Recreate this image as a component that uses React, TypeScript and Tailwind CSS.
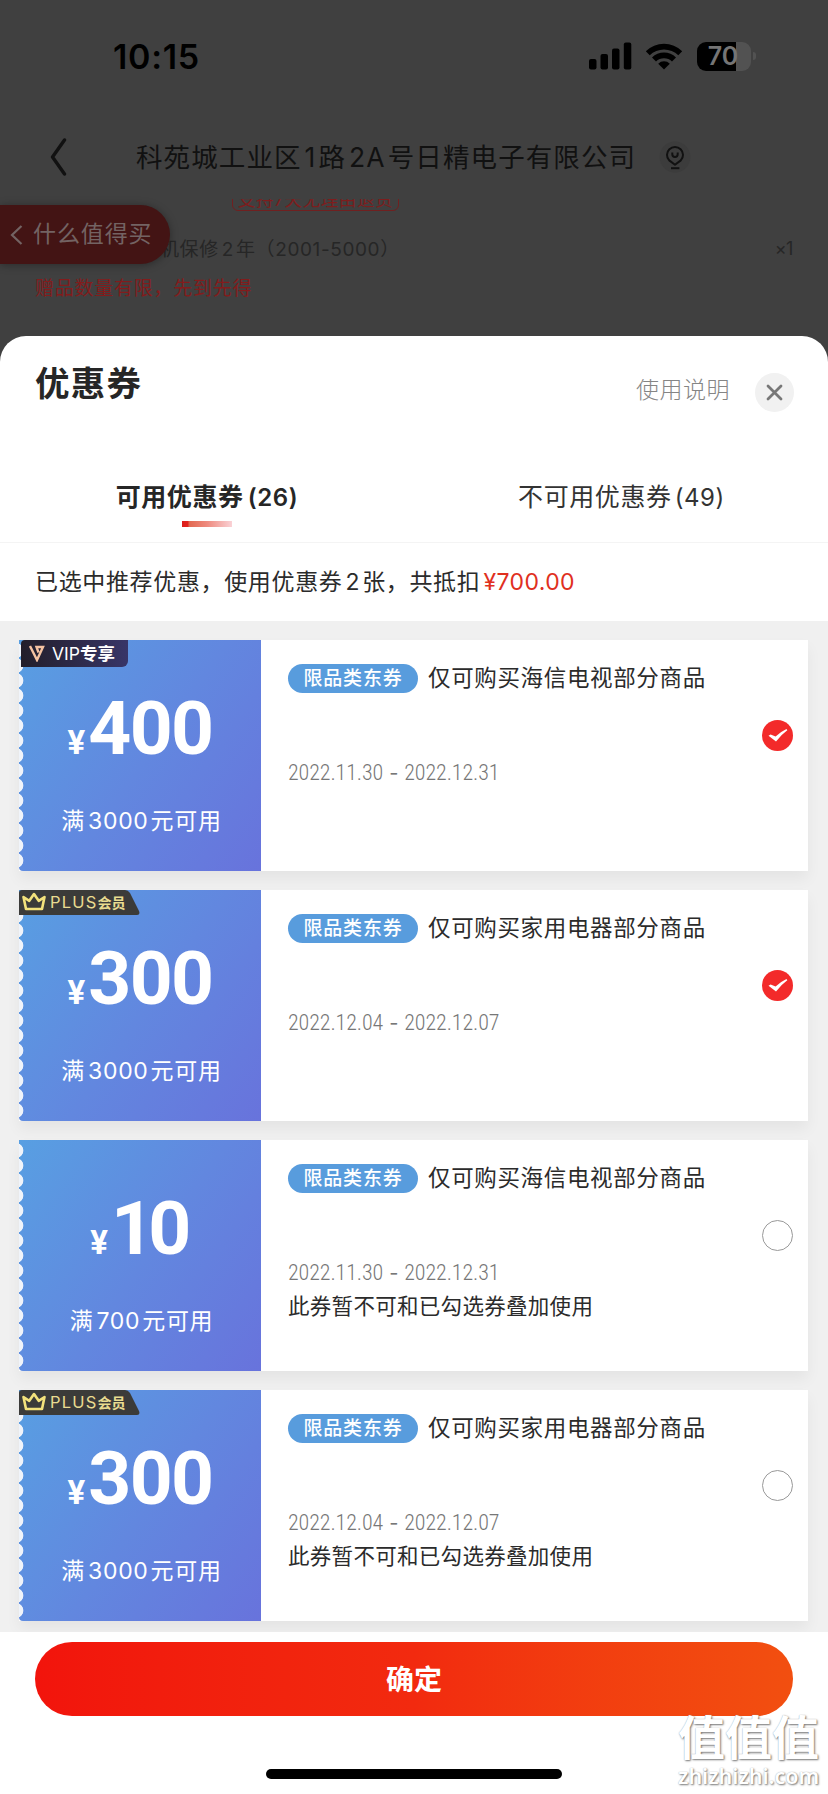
import React, { ReactNode } from 'react';

interface Coupon {
  id: number;
  amount: string;
  threshold: string;
  scope: string;
  period: [string, string];
  badge?: 'vip' | 'plus';
  selected?: boolean;
  note?: string;
}

const STACK_NOTE = '此券暂不可和已勾选券叠加使用';

const coupons: Coupon[] = [
  { id: 1, amount: '400', threshold: '3000', scope: '仅可购买海信电视部分商品', period: ['2022.11.30', '2022.12.31'], badge: 'vip', selected: true },
  { id: 2, amount: '300', threshold: '3000', scope: '仅可购买家用电器部分商品', period: ['2022.12.04', '2022.12.07'], badge: 'plus', selected: true },
  { id: 3, amount: '10', threshold: '700', scope: '仅可购买海信电视部分商品', period: ['2022.11.30', '2022.12.31'], note: STACK_NOTE },
  { id: 4, amount: '300', threshold: '3000', scope: '仅可购买家用电器部分商品', period: ['2022.12.04', '2022.12.07'], badge: 'plus', note: STACK_NOTE },
];

// Latin run inside Chinese text, with a little air on both sides
const Num = ({ children }: { children: ReactNode }) => <span className="ml-[3px] mr-[2px]">{children}</span>;

const StatusBar = () => (
  <div className="flex h-[112px] items-center justify-between pl-[113px] pr-[72px]">
    <span className="pt-0.5 text-[34px] font-semibold leading-none tracking-[0.7px] text-black">10:15</span>
    <div className="flex items-center">
      <svg className="mr-[13px]" width="43" height="28" viewBox="0 0 43 28">
        <rect x="0" y="17" width="7.5" height="10.5" rx="2" />
        <rect x="11.5" y="12" width="7.5" height="15.5" rx="2" />
        <rect x="23" y="6.5" width="7.5" height="21" rx="2" />
        <rect x="34.8" y="0.5" width="7.5" height="27" rx="2" />
      </svg>
      <svg className="mr-[14px]" width="38" height="28" viewBox="0 0 38 28">
        <path d="M0.8 9.3 A26 26 0 0 1 37.2 9.3 L33.3 13.3 A20.4 20.4 0 0 0 4.7 13.3 Z" />
        <path d="M7 15.5 A17 17 0 0 1 31 15.5 L27 19.5 A11.4 11.4 0 0 0 11 19.5 Z" />
        <path d="M13.2 21.7 A8.3 8.3 0 0 1 24.8 21.7 L19 27.5 Z" />
      </svg>
      <div className="flex h-[29px] w-[54px] items-center justify-center rounded-[9px] bg-[linear-gradient(90deg,#000_72%,#525252_72%)] pr-0.5">
        <span className="text-[25px] font-semibold leading-none text-[#757575]">70</span>
      </div>
      <span className="ml-[2px] h-2 w-[3px] rounded-r-full bg-[#525252]" />
    </div>
  </div>
);

const AddressBar = () => (
  <div className="flex h-[87px] items-center pl-[49px] pt-[3px] text-[#111]">
    <svg width="18" height="38" viewBox="0 0 18 38" fill="none" stroke="currentColor" strokeWidth="3.4" strokeLinecap="round" strokeLinejoin="round">
      <path d="M15.5 2 L3.5 19 L15.5 36" />
    </svg>
    <span className="ml-[69px] whitespace-nowrap text-[26.5px] leading-none tracking-[1.1px]">
      科苑城工业区<Num>1</Num>路<Num>2A</Num>号日精电子有限公司
    </span>
    <svg className="absolute left-[659px] top-[141px]" width="32" height="32" viewBox="0 0 32 32" fill="none" stroke="currentColor" strokeWidth="2">
      <circle cx="16" cy="16" r="15.5" fill="#3c3c3c" stroke="none" />
      <path d="M16 23.8 L10.2 19.4 A8 8 0 1 1 21.8 19.4 Z" strokeLinejoin="round" />
      <path d="M13.3 11.6 V13.2 A2.7 2.7 0 0 0 18.7 13.2 V11.6" />
      <path d="M12 27.2 H20.4" />
    </svg>
  </div>
);

// The order page that stays dimmed behind the sheet
const DimmedPage = () => (
  <div className="relative h-[336px] overflow-hidden">
    <StatusBar />
    <AddressBar />
    <div className="flex h-3 items-end overflow-hidden pl-[232px]">
      <span className="flex h-[29px] w-[167px] shrink-0 items-center justify-center rounded-md border border-[#702020] pt-[7px] text-[17.5px] leading-none tracking-[0.6px] text-[#7d1d1d]">
        支持7天无理由退货
      </span>
    </div>
    <div className="mt-[26px] flex h-6 items-center justify-between pl-[160px] pr-[35px] text-[19px] leading-none tracking-[0.6px] text-[#262626]">
      <span>机保修<Num>2</Num>年（2001-5000）</span>
      <span className="text-[18px] tracking-tight">×1</span>
    </div>
    <div className="mt-[15px] flex h-6 items-center pl-[35px] text-[19px] leading-none tracking-[0.75px] text-[#821c1c]">
      赠品数量有限，先到先得
    </div>
    <div className="absolute left-0 top-[205px] flex h-[59px] w-[170px] items-center rounded-r-full bg-[#431414] pl-2.5 text-[#736363] shadow-[0_1px_8px_rgba(0,0,0,0.35)]">
      <svg width="13" height="20" viewBox="0 0 13 20" fill="none" stroke="currentColor" strokeWidth="2.2">
        <path d="M11.5 1 L2 10 L11.5 19" />
      </svg>
      <span className="ml-[10px] whitespace-nowrap text-[23px] leading-none tracking-[0.9px]">什么值得买</span>
    </div>
  </div>
);

const VipBadge = () => (
  <div className="absolute left-0.5 top-0 flex h-[26.5px] w-[107px] items-center rounded-br-md rounded-tl bg-linear-to-r from-[#221e2a] to-[#383568] pl-2 text-white">
    <svg width="16" height="17" viewBox="0 0 16 17" fill="none" stroke="#f5c3a2" strokeWidth="2.4">
      <path d="M1 1 L8 15 L14 2 H7.5 L9.5 7.5" />
    </svg>
    <span className="ml-[7px] pt-px text-[17.5px] leading-none">
      VIP<span className="text-[17.5px] font-bold">专享</span>
    </span>
  </div>
);

const PlusBadge = () => (
  <div className="absolute left-0 top-0 flex h-[25px] w-[121px] items-center pl-[3px]">
    <svg className="absolute inset-0" width="121" height="25" viewBox="0 0 121 25">
      <path d="M3 0 H106 Q109 0 111 3 L120 21 Q121.5 25 118 25 H0 V3 Q0 0 3 0 Z" fill="#3b3b39" />
    </svg>
    <svg className="relative -top-px" width="24" height="19" viewBox="0 0 24 19" fill="none" stroke="#f3e27c" strokeWidth="2.6" strokeLinejoin="round">
      <path d="M4 17 L1.5 5 L7.3 8.8 L12 2 L16.7 8.8 L22.5 5 L20 17 Z" />
    </svg>
    <span className="relative ml-1 whitespace-nowrap text-[16.5px] leading-none tracking-[1.2px] text-[#e9dc90]">
      PLUS<span className="text-[14px] font-bold tracking-normal">会员</span>
    </span>
  </div>
);

const Radio = ({ checked }: { checked?: boolean }) =>
  checked ? (
    <svg width="31" height="31" viewBox="0 0 31 31">
      <circle cx="15.5" cy="15.5" r="15.5" fill="#f32a2a" />
      <path d="M6.5 15.8 L8.6 14.4 L13.6 16.6 Q18 12 24.5 9 L25.3 10.2 Q19 14.8 14 21.5 Z" fill="#fff" />
    </svg>
  ) : (
    <span className="size-[31px] rounded-full border-[1.5px] border-[#999]" />
  );

const CouponCard = ({ coupon }: { coupon: Coupon }) => (
  <div className="relative flex h-[230.5px] shrink-0 bg-white shadow-[0_8px_14px_rgba(0,0,0,0.05)]">
    <div className="relative flex w-[242px] flex-col items-center rounded-bl bg-linear-[125deg,#589fe2_0%,#6287df_52%,#6873dc_100%] text-white">
      {/* perforated edge */}
      <div className="absolute left-0 top-[3px] h-[225px] w-[6px] bg-[radial-gradient(circle_at_-3px_7.5px,#f0f4fa_7px,transparent_7.7px)] bg-size-[6px_15px]" />
      <div className="mt-[50px] flex h-[76px] items-baseline font-['Roboto','Noto_Sans_CJK_SC',sans-serif] font-bold">
        <span className="mr-[3px] text-[33px] leading-[76px]">¥</span>
        <span className="text-[75px] leading-[76px] tracking-[-1.6px]">
          {coupon.amount.split('').map((digit, i) => (
            <span key={i} className={digit === '1' ? '-mr-1' : undefined}>{digit}</span>
          ))}
        </span>
      </div>
      <div className="mt-[43px] flex h-6 items-center whitespace-nowrap pl-[3px] text-[23px] leading-none tracking-[0.7px]">
        满<Num>{coupon.threshold}</Num>元可用
      </div>
    </div>
    <div className="flex flex-col pl-[27px]">
      <div className="mt-[23.5px] flex h-[29px] items-center">
        <span className="flex h-[29px] w-[130px] items-center justify-center rounded-full bg-[#589cdd] text-[19px] font-medium leading-none tracking-[0.8px] text-white">
          限品类东券
        </span>
        <span className="ml-2.5 whitespace-nowrap pt-px text-[22.5px] leading-none tracking-[0.65px] text-[#2b2b2b]">{coupon.scope}</span>
      </div>
      <div className="mt-[68px] flex h-6 items-center gap-[6px] font-['Roboto',sans-serif] text-[22px] font-light leading-none tracking-[-0.1px] text-[#777] [font-stretch:75%]">
        <span>{coupon.period[0]}</span>
        <span className="font-['Inter',sans-serif] text-[20px] font-normal">-</span>
        <span>{coupon.period[1]}</span>
      </div>
      {coupon.note && <p className="mt-[9px] text-[21.5px] leading-6 tracking-[0.3px] text-[#2b2b2b]">{coupon.note}</p>}
    </div>
    <div className="ml-auto flex pr-[15px] pt-20">
      <Radio checked={coupon.selected} />
    </div>
  </div>
);

const CouponSheet = () => (
  <div className="relative flex h-[1458px] flex-col rounded-t-[26px] bg-white text-[#262626]">
    <div className="flex h-28 items-start justify-between pl-[35px] pr-[34px]">
      <h1 className="mt-[30px] text-[34.5px] font-bold leading-9 tracking-[1.2px]">优惠券</h1>
      <div className="mt-9 flex h-10 items-center">
        <span className="mb-1 text-[23px] font-light leading-none tracking-[0.5px] text-[#858585]">使用说明</span>
        <span className="ml-[25px] flex size-[39px] items-center justify-center rounded-full bg-[#f1f1f1]">
          <svg width="17" height="17" viewBox="0 0 17 17" stroke="#777" strokeWidth="2.8" strokeLinecap="round">
            <path d="M2 2 L15 15 M15 2 L2 15" />
          </svg>
        </span>
      </div>
    </div>
    <div className="grid h-[95px] grid-cols-2 border-b border-[#f4f4f4] text-[25px] leading-7 tracking-[0.6px]">
      <div className="flex flex-col items-center pt-[35px]">
        <span className="font-bold">
          可用优惠券<span className="ml-[4px] text-[24px] font-semibold">(26)</span>
        </span>
        <span className="mt-[9px] h-1.5 w-[50px] bg-linear-[90deg,#dc1f1c_0%,#e2231e_12%,#e26850_14%,#ee8a7e_50%,#fad2d6_100%]" />
      </div>
      <div className="flex justify-center pt-[35px] text-[#333]">
        <span className="pl-px">
          不可用优惠券<span className="ml-[3px] text-[24px]">(49)</span>
        </span>
      </div>
    </div>
    <div className="flex h-[78px] items-center whitespace-nowrap pl-[35px] text-[23px] leading-none tracking-[0.65px] text-[#2b2b2b]">
      已选中推荐优惠，使用优惠券<Num>2</Num>张，共抵扣<span className="ml-[3px] tracking-[0.4px] text-[#e0301e]">¥700.00</span>
    </div>
    <div className="flex h-[1011px] flex-col gap-[19.5px] overflow-hidden bg-[#f0f0f0] pl-[19px] pr-5 pt-[19px]">
      {coupons.map((coupon) => (
        <div key={coupon.id} className="relative">
          <CouponCard coupon={coupon} />
          {coupon.badge === 'vip' && <VipBadge />}
          {coupon.badge === 'plus' && <PlusBadge />}
        </div>
      ))}
    </div>
    <div className="flex flex-col items-center px-[35px] pt-2.5">
      <button className="h-[74px] w-full rounded-full bg-linear-to-r from-[#f2140c] via-[#f22a0f] to-[#f24f10] pt-0.5 text-[28px] font-bold leading-none text-white">
        确定
      </button>
      <div className="mt-[53px] h-2.5 w-[296px] rounded-full bg-black" />
    </div>
  </div>
);

const Watermark = () => (
  <div className="absolute left-[678px] top-[1712px] w-[144px] whitespace-nowrap text-white [text-shadow:1px_1px_2px_#777,0_0_1px_#aaa]">
    <div className="text-[47px] font-bold leading-[52px]">值值值</div>
    <div className="font-['Noto_Sans',sans-serif] text-[21.5px] font-semibold leading-6">zhizhizhi.com</div>
  </div>
);

export default function App() {
  return (
    <div className="relative h-[1794px] w-[828px] overflow-hidden bg-[#404040] font-['Inter','Noto_Sans_CJK_SC',sans-serif]">
      <DimmedPage />
      <CouponSheet />
      <Watermark />
    </div>
  );
}
